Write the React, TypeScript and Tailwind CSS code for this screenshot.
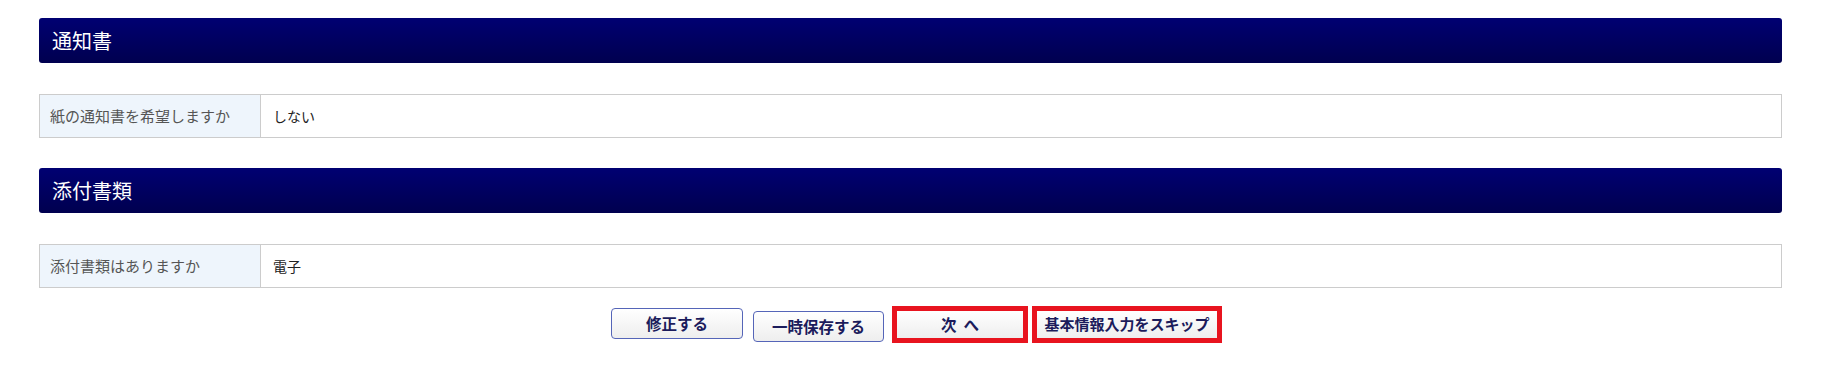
const font = "font-['Noto_Sans_CJK_JP','Noto_Sans',sans-serif]";

const SectionHeader = ({ title }: { title: string }) => (
  <div className="flex h-[45px] items-center rounded-[3px] bg-gradient-to-b from-[#000072] to-[#00004f] pl-[13px]">
    <h2 className="text-[20px] leading-none text-white">{title}</h2>
  </div>
);

const InfoRow = ({ label, value }: { label: string; value: string }) => (
  <div className="flex h-[44px] border border-[#cccccc]">
    <div className="flex w-[221px] flex-shrink-0 items-center border-r border-[#cccccc] bg-[#eef5fc] pl-[10px] text-[15px] text-[#555555]">
      {label}
    </div>
    <div className="flex items-center pl-[12px] text-[14px] text-[#222222]">{value}</div>
  </div>
);

export default function App() {
  return (
    <div className={`${font} min-h-[367px] bg-white px-[39px] pt-[18px]`}>
      <SectionHeader title="通知書" />
      <div className="mt-[31px]">
        <InfoRow label="紙の通知書を希望しますか" value="しない" />
      </div>

      <div className="mt-[30px]">
        <SectionHeader title="添付書類" />
      </div>
      <div className="mt-[31px]">
        <InfoRow label="添付書類はありますか" value="電子" />
      </div>

      <div className="mt-[18px] flex items-start justify-center pl-[12px]">
        <button className="mt-[2px] h-[31px] w-[132px] rounded-[4px] border border-[#5565b8] bg-gradient-to-b from-white to-[#eeeeee] text-[15.5px] font-bold text-[#1c1c5c]">
          修正する
        </button>
        <button className="ml-[10px] mt-[5px] h-[31px] w-[131px] rounded-[4px] border border-[#5565b8] bg-gradient-to-b from-white to-[#eeeeee] text-[15.5px] font-bold text-[#1c1c5c]">
          一時保存する
        </button>
        <button className="ml-[8px] h-[37px] w-[136px] border-[5px] border-[#e8141f] bg-gradient-to-b from-white to-[#eeeeee] text-[15.5px] font-bold text-[#1c1c5c]">
          次<span className="ml-[7px]">へ</span>
        </button>
        <button className="ml-[4px] h-[37px] w-[190px] border-[5px] border-[#e8141f] bg-gradient-to-b from-white to-[#eeeeee] text-[15px] font-bold text-[#1c1c5c]">
          基本情報入力をスキップ
        </button>
      </div>
    </div>
  );
}
